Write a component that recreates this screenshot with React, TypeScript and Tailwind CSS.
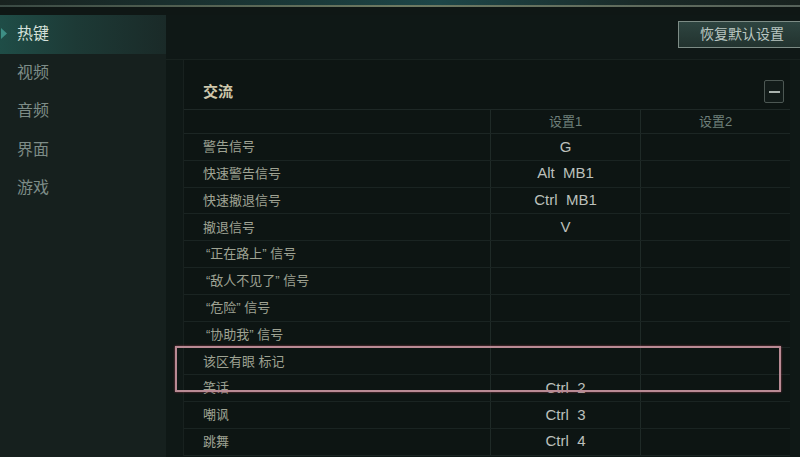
import React from "react";

const rows: { label: string; v1: string; v2: string; q?: boolean }[] = [
  { label: "警告信号", v1: "G", v2: "" },
  { label: "快速警告信号", v1: "Alt  MB1", v2: "" },
  { label: "快速撤退信号", v1: "Ctrl  MB1", v2: "" },
  { label: "撤退信号", v1: "V", v2: "" },
  { label: "“正在路上” 信号", v1: "", v2: "", q: true },
  { label: "“敌人不见了” 信号", v1: "", v2: "", q: true },
  { label: "“危险” 信号", v1: "", v2: "", q: true },
  { label: "“协助我” 信号", v1: "", v2: "", q: true },
  { label: "该区有眼 标记", v1: "", v2: "" },
  { label: "笑话", v1: "Ctrl  2", v2: "" },
  { label: "嘲讽", v1: "Ctrl  3", v2: "" },
  { label: "跳舞", v1: "Ctrl  4", v2: "" },
];

const font = { fontFamily: '"Liberation Sans", "Noto Sans CJK SC", sans-serif' };

export default function App() {
  return (
    <div
      className="w-[800px] h-[457px] overflow-hidden flex flex-col bg-[#0e1614] relative"
      style={font}
    >
      {/* top bar */}
      <div className="h-[5px] bg-[linear-gradient(90deg,#18221f_0%,#1a3a3a_40%,#1d4648_55%,#1a2a28_80%,#18221f_100%)]" />
      <div className="h-[2px] bg-[linear-gradient(90deg,#3a4a44_0%,#6e7a62_50%,#56625a_100%)]" />
      <div className="h-[8px] bg-[#0f1715]" />

      <div className="flex flex-1">
        {/* sidebar */}
        <div className="w-[166px] bg-[#16201e] flex flex-col">
          <div className="h-[38.5px] flex items-center relative bg-[linear-gradient(90deg,#1f4d47_0%,#1d3a36_45%,#1a2a28_100%)]">
            <svg className="absolute left-[1px] top-[13px]" width="7" height="11" viewBox="0 0 7 11">
              <path d="M0 0 L6 5.5 L0 11 Z" fill="#3d8f85" />
            </svg>
            <span className="ml-[17px] text-[16px] text-[#d6e2dc]">热键</span>
          </div>
          {["视频", "音频", "界面", "游戏"].map((t) => (
            <div key={t} className="h-[38.5px] flex items-center">
              <span className="ml-[17px] text-[16px] text-[#7d8c87]">{t}</span>
            </div>
          ))}
        </div>

        {/* main */}
        <div className="flex-1 flex flex-col bg-[#0f1816]">
          <div className="h-[45px] flex items-start justify-end border-b border-[#18221f]">
            <div className="mt-[6px] mr-[-12px] h-[27px] w-[134px] flex items-center pl-[21px] border border-[#7d8c86] bg-[linear-gradient(180deg,#2e4440_0%,#22332f_100%)] text-[14px] text-[#b9c6c1]">
              恢复默认设置
            </div>
          </div>

          <div className="ml-[17px] mr-[10px] flex flex-col bg-[#0d1513] border-l border-[#18211f] relative">
            <div className="h-[50px] flex items-end justify-between pb-[6px] border-b border-[#1e2826]">
              <span className="ml-[19px] text-[15px] text-[#cfc8ac] font-bold">交流</span>
              <div className="mr-[6px] mb-[0px] w-[20px] h-[23px] border border-[#4c5753] rounded-[2px] bg-[#121b19] flex items-center justify-center">
                <div className="w-[11px] h-[2px] bg-[#aab3ae]" />
              </div>
            </div>
            <div className="h-[24px] flex border-b border-[#1c2624]">
              <div className="w-[306px]" />
              <div className="w-[150px] border-l border-[#1f2a27] flex items-center justify-center text-[13px] text-[#6f807b]">
                设置1
              </div>
              <div className="flex-1 border-l border-[#1f2a27] flex items-center justify-center text-[13px] text-[#6f807b]">
                设置2
              </div>
            </div>
            {rows.map((r, i) => (
              <div key={i} className="h-[26.8px] flex border-b border-[#1a2422]">
                <div
                  className={`w-[306px] flex items-center text-[13px] text-[#9fa393] whitespace-pre ${
                    r.q ? "pl-[22px]" : "pl-[19px]"
                  }`}
                >
                  {r.label}
                </div>
                <div className="w-[150px] border-l border-[#1f2a27] flex items-center justify-center text-[15px] text-[#bcc0bc] whitespace-pre">
                  {r.v1}
                </div>
                <div className="flex-1 border-l border-[#1f2a27] flex items-center justify-center text-[15px] text-[#bcc0bc]">
                  {r.v2}
                </div>
              </div>
            ))}
          </div>
        </div>
      </div>

      {/* highlight box */}
      <div className="absolute left-[175px] top-[346px] w-[606px] h-[46px] border-[2px] border-[#b98a94] shadow-[0_0_2px_#8a3a4a]" />
    </div>
  );
}
